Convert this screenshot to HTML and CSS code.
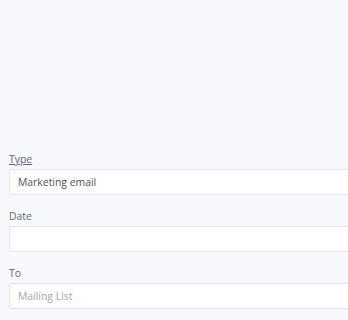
FILE: index.html
```html
<!DOCTYPE html>
<html>
<head>
<meta charset="utf-8">
<link rel="stylesheet" href="styles.css">
</head>
<body>
<form class="form">
  <div class="field">
    <label class="label"><abbr class="abbr" title="Type">Type</abbr></label>
    <div class="input">Marketing email</div>
  </div>
  <div class="field">
    <label class="label">Date</label>
    <div class="input"></div>
  </div>
  <div class="field">
    <label class="label">To</label>
    <div class="input placeholder">Mailing List</div>
  </div>
</form>
</body>
</html>
```
FILE: styles.css
```css
html, body {
  margin: 0;
  padding: 0;
  background: #f7f8fc;
  overflow: hidden;
}
body {
  width: 348px;
  height: 320px;
  font-family: "Open Sans", "Noto Sans", sans-serif;
}
.form {
  padding: 152px 0 0 9px;
  width: 339px;
  overflow: hidden;
}
.field {
  margin-bottom: 14px;
  width: 420px;
}
.label {
  display: block;
  font-size: 10.4px;
  line-height: 15px;
  color: #62666c;
  margin-bottom: 2px;
}
.abbr {
  text-decoration: underline;
}
.input {
  box-sizing: border-box;
  height: 26px;
  border: 1px solid #e8e6ec;
  background: #fff;
  border-radius: 2px;
  padding: 0 8px;
  font-size: 10.4px;
  line-height: 25px;
  color: #4e5258;
}
.placeholder {
  color: #a3a6ab;
}
```
